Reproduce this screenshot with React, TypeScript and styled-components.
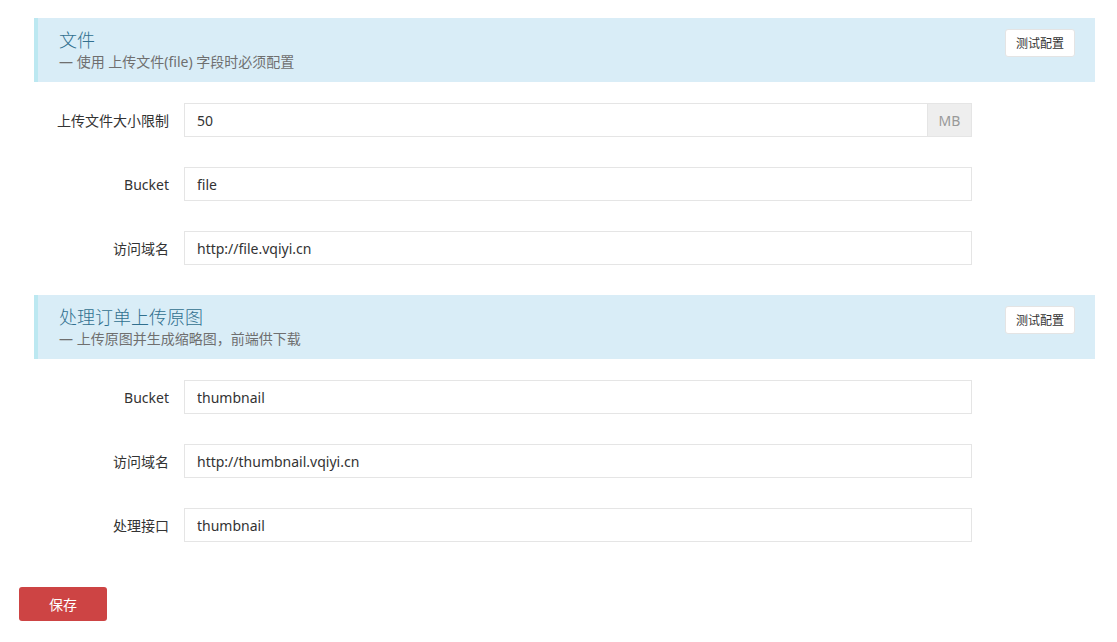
import React from 'react';
import styled, { createGlobalStyle } from 'styled-components';

const GlobalStyle = createGlobalStyle`
	html, body {
		margin: 0;
		padding: 0;
		background: #fff;
		font-family: "Noto Sans", "Noto Sans CJK SC", sans-serif;
		color: #333;
	}
	* {
		box-sizing: border-box;
	}
`;

const Styled = {
	Page: styled.div`
		width: 1117px;
		padding: 18px 22px 0 19px;
	`,
	Section: styled.div`
		margin-left: 15px;
		margin-bottom: 30px;
	`,
	Header: styled.div`
		display: flex;
		align-items: flex-start;
		justify-content: space-between;
		background: #d9edf7;
		border-left: 4px solid #bce8f1;
		padding: 10px 20px 10px 21px;
		height: 64px;
		margin-bottom: 21px;
	`,
	HeaderText: styled.div`
		display: flex;
		flex-direction: column;
	`,
	Title: styled.div`
		font-size: 18px;
		line-height: 24px;
		font-weight: 300;
		color: #31708f;
	`,
	Subtitle: styled.div`
		font-size: 14px;
		line-height: 20px;
		color: #6f6f6f;
	`,
	TestButton: styled.button`
		margin-top: 1px;
		height: 28px;
		padding: 0 10px;
		background: #fff;
		border: 1px solid #e4e4e4;
		border-radius: 3px;
		font-family: inherit;
		font-size: 12px;
		color: #333;
	`,
	Row: styled.div`
		display: flex;
		align-items: center;
		gap: 15px;
		margin-bottom: 30px;
		&:last-child {
			margin-bottom: 0;
		}
	`,
	Label: styled.label`
		width: 135px;
		text-align: right;
		font-size: 14px;
		color: #333;
	`,
	InputGroup: styled.div`
		display: flex;
		width: 788px;
		height: 34px;
	`,
	Input: styled.input`
		flex: 1;
		min-width: 0;
		height: 34px;
		padding: 0 12px;
		border: 1px solid #e5e5e5;
		font-family: inherit;
		font-size: 14px;
		color: #333;
		outline: none;
	`,
	Addon: styled.span`
		display: flex;
		align-items: center;
		justify-content: center;
		width: 44px;
		background: #eeeeee;
		border: 1px solid #e5e5e5;
		border-left: none;
		font-size: 14px;
		color: #999;
	`,
	Footer: styled.div`
		padding-top: 15px;
	`,
	SaveButton: styled.button`
		width: 88px;
		height: 34px;
		background: #cd4444;
		border: none;
		border-radius: 3px;
		color: #fff;
		font-family: inherit;
		font-size: 14px;
	`,
};

type Field = { label: string; value: string; addon?: string };

const sections: { title: string; desc: string; fields: Field[] }[] = [
	{
		title: '文件',
		desc: '— 使用 上传文件(file) 字段时必须配置',
		fields: [
			{ label: '上传文件大小限制', value: '50', addon: 'MB' },
			{ label: 'Bucket', value: 'file' },
			{ label: '访问域名', value: 'http://file.vqiyi.cn' },
		],
	},
	{
		title: '处理订单上传原图',
		desc: '— 上传原图并生成缩略图，前端供下载',
		fields: [
			{ label: 'Bucket', value: 'thumbnail' },
			{ label: '访问域名', value: 'http://thumbnail.vqiyi.cn' },
			{ label: '处理接口', value: 'thumbnail' },
		],
	},
];

const App = () => {
	return (
		<Styled.Page>
			<GlobalStyle />
			{sections.map(section => (
				<Styled.Section key={section.title}>
					<Styled.Header>
						<Styled.HeaderText>
							<Styled.Title>{section.title}</Styled.Title>
							<Styled.Subtitle>{section.desc}</Styled.Subtitle>
						</Styled.HeaderText>
						<Styled.TestButton>测试配置</Styled.TestButton>
					</Styled.Header>
					{section.fields.map(field => (
						<Styled.Row key={field.label}>
							<Styled.Label>{field.label}</Styled.Label>
							<Styled.InputGroup>
								<Styled.Input defaultValue={field.value} />
								{field.addon && <Styled.Addon>{field.addon}</Styled.Addon>}
							</Styled.InputGroup>
						</Styled.Row>
					))}
				</Styled.Section>
			))}
			<Styled.Footer>
				<Styled.SaveButton>保存</Styled.SaveButton>
			</Styled.Footer>
		</Styled.Page>
	);
};

export default App;
